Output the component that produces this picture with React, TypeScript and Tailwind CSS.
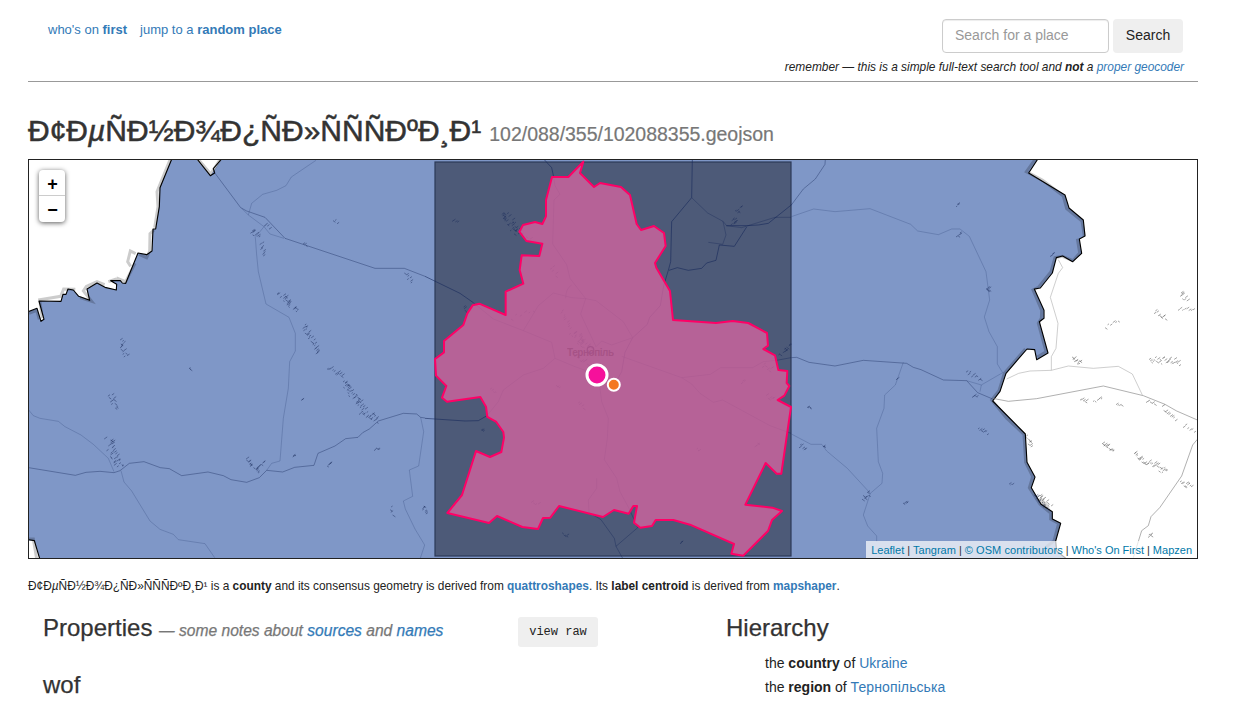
import React from "react";

type Cluster = [number, number, number, number, number, number];

// x1, y1, x2, y2, spread, count for each built-up patch
const settlements: Cluster[] = [
  [251, 231, 256, 237, 6, 9], [260, 243, 265, 256, 5, 9], [264, 225, 269, 228, 3, 4],
  [333, 220, 337, 223, 2, 3], [303, 244, 306, 245, 1, 3], [406, 273, 411, 283, 5, 7],
  [280, 294, 295, 311, 7, 24], [303, 325, 318, 354, 6, 26], [121, 340, 125, 357, 6, 14],
  [110, 395, 115, 408, 6, 12], [108, 439, 110, 448, 8, 10], [110, 450, 119, 467, 9, 22],
  [245, 459, 258, 473, 6, 14], [257, 469, 262, 462, 3, 7], [327, 367, 342, 378, 5, 12],
  [343, 382, 361, 407, 9, 34], [359, 410, 377, 420, 9, 22], [189, 369, 190, 369, 2, 3],
  [301, 400, 302, 400, 2, 2], [292, 457, 294, 455, 2, 3], [327, 465, 330, 463, 2, 4],
  [374, 450, 379, 448, 3, 5], [391, 507, 392, 515, 3, 4], [422, 506, 425, 514, 5, 7],
  [452, 220, 457, 222, 3, 4], [505, 213, 516, 232, 10, 28], [735, 212, 741, 209, 5, 6],
  [730, 225, 735, 219, 6, 8], [464, 307, 465, 312, 3, 4], [481, 431, 483, 432, 2, 3],
  [562, 534, 567, 535, 3, 4], [680, 543, 681, 543, 2, 3], [780, 355, 789, 345, 4, 10],
  [956, 206, 958, 205, 2, 3], [956, 237, 960, 233, 3, 5], [986, 290, 989, 289, 3, 6],
  [1050, 256, 1053, 254, 2, 4], [966, 373, 980, 379, 5, 9], [972, 396, 977, 397, 3, 4],
  [978, 429, 987, 434, 3, 7], [799, 446, 805, 449, 4, 6], [823, 446, 824, 446, 2, 3],
  [807, 407, 810, 407, 2, 4], [862, 499, 869, 493, 6, 8], [896, 379, 897, 379, 2, 2],
  [903, 504, 907, 503, 3, 4], [1009, 485, 1012, 485, 2, 3],
  [1033, 495, 1047, 510, 3, 12], [510, 230, 530, 238, 5, 6],
];

const easternSettlements: Cluster[] = [
  [1180, 293, 1185, 301, 5, 8], [1178, 309, 1193, 311, 3, 8], [1154, 312, 1165, 318, 4, 9],
  [1105, 327, 1118, 321, 2, 6], [1149, 359, 1179, 363, 6, 26], [1072, 359, 1080, 363, 6, 12],
  [1080, 401, 1086, 400, 2, 5], [1093, 401, 1101, 399, 2, 5], [1116, 405, 1121, 405, 2, 4],
  [1146, 402, 1154, 403, 2, 5], [1162, 408, 1175, 420, 3, 9], [1183, 426, 1194, 431, 4, 6],
  [1102, 443, 1113, 451, 5, 14], [1134, 454, 1145, 462, 5, 14], [1146, 462, 1166, 472, 6, 20],
  [1180, 482, 1191, 486, 7, 10], [1148, 536, 1151, 535, 3, 5], [1027, 436, 1030, 447, 4, 8],
  [1038, 496, 1048, 506, 7, 16],
];

const cityBlocks: Cluster[] = [
  [572, 333, 586, 348, 11, 30], [560, 311, 571, 329, 4, 9], [551, 267, 555, 276, 4, 5],
  [511, 318, 533, 311, 3, 6], [490, 389, 495, 391, 3, 4], [556, 386, 559, 388, 2, 3],
  [579, 403, 582, 408, 2, 4], [696, 449, 698, 451, 2, 3], [755, 447, 758, 443, 3, 4],
  [762, 366, 772, 370, 5, 7], [766, 397, 773, 398, 3, 5], [741, 383, 744, 381, 2, 3],
  [531, 502, 538, 504, 3, 4], [574, 357, 587, 362, 4, 10],
];

function noise(seed: number) {
  const v = Math.sin(seed * 127.1 + 11.7) * 43758.5453;
  return v - Math.floor(v);
}

function ticks(list: Cluster[]) {
  return list
    .map(([x1, y1, x2, y2, spread, count], c) => {
      const horizontal = Math.abs(x2 - x1) > Math.abs(y2 - y1);
      let d = "";
      for (let i = 0; i < count; i++) {
        const t = count > 1 ? i / (count - 1) : 0;
        const j = (noise(c * 57 + i) - 0.5) * spread;
        const x = x1 + (x2 - x1) * t + (horizontal ? 0 : j);
        const y = y1 + (y2 - y1) * t + (horizontal ? j : 0);
        const l = 1.2 + noise(c * 31 + i * 7) * 1.8;
        const s = noise(c + i * 13) > 0.25 ? -0.7 : 0.7;
        d += `M${x.toFixed(1)} ${y.toFixed(1)}l${l.toFixed(1)} ${(l * s).toFixed(1)}`;
      }
      return d;
    })
    .join("");
}

const westBorder =
  "M457 8L420 98L418 155L407 222H399L396 288L380 299L354 294L317 385L307 384L301 377H272L290 388L289 405L255 397L231 384L201 402L209 436L176 424L160 405L144 402L138 418H129L123 439L57 438L72 493L63 499L51 460L20 472";
const eastBorder =
  "M746 8L716 54L825 120L837 159L880 195L885 243L868 252L875 295L848 320L818 303L799 308L787 354L751 399L733 402L762 466V490L748 500L774 594L740 614L734 584L711 582L648 655L630 709L608 738L706 837L711 922L735 966L724 998L753 1048L787 1070V1092L812 1105L797 1158L800 1188L830 1212";
const county =
  "M30 612L57 592V558L115 510L127 475L143 451L163 446L242 480V410L295 386L284 345L290 301L343 303L352 266L304 258L283 230L294 210L330 201L352 207L363 184V135L381 66H430L475 20L465 54L507 96L525 84L588 96L615 120L635 207L648 225L687 213L717 234L722 273L690 324L694 338L735 408L744 495L873 504L923 498L970 504L1026 534L1029 572L1015 582L1050 601L1060 645L1087 648L1085 684L1093 693L1078 722L1058 735L1098 756L1069 956H1055L1022 924L961 1049L1042 1058L1071 1068L1041 1095L1029 1128L955 1202L919 1196L927 1167L795 1109L745 1095H692L681 1113L646 1118L627 1103L636 1053H625L611 1076L567 1065L534 1086L402 1053L376 1088L354 1089L339 1122L292 1116L216 1083L192 1104L67 1074L111 1020L153 888L195 906L229 891L237 848L235 831L214 801L187 786L183 755L166 726L66 740L51 728L64 693L33 662Z";

function RegionMap() {
  return (
    <svg viewBox="29 160 1168 398" className="block h-full w-full">
      <rect x="29" y="160" width="1168" height="398" fill="#7f97c7" />

      <g transform="translate(20 155) scale(.33333)">
        <path d={westBorder + "V8Z"} fill="#fff" />
        <path d="M24 1156L43 1157L60 1214H24Z" fill="#fff" />
        <path d="M525 8L571 62L608 8Z" fill="#fff" />
      </g>
      <g transform="translate(790 155) scale(.33333)">
        <path d={eastBorder + "H1230V8Z"} fill="#fff" />
      </g>

      <g fill="none" stroke="#000" strokeOpacity=".2" strokeWidth="9">
        <g transform="translate(20 155) scale(.33333)">
          <path d="M451 12L411 110L414 155L404 218M402 225L390 236L389 288L380 308L357 298M347 296L331 288L323 320L332 334M345 325L317 380L289 369M289 372L265 380M254 389L231 380L199 394L190 408L215 439L180 428M166 403L131 402L122 424L59 434L67 490M27 475L50 466L58 493M25 1152H40L50 1212M534 12L572 57L600 14" />
        </g>
        <g transform="translate(790 155) scale(.33333)">
          <path d="M739 8L709 50L758 76L820 123L830 161L876 198L883 243M862 251L869 294L849 317L817 304L795 308L783 350L745 397L729 405L755 466L754 490L745 505L768 590L742 606M706 582L643 655L627 707L605 735L650 790L702 838L707 922L728 965L718 998L750 1048L782 1074V1092L806 1105L792 1158L770 1175" />
        </g>
      </g>
      <path d="M1041 497L1050 507L1046 509L1037 500Z" fill="#000" opacity=".18" />

      <g fill="none" stroke="#000" strokeWidth="3.4" strokeLinejoin="round">
        <g transform="translate(20 155) scale(.33333)">
          <path d={westBorder} />
          <path d="M20 1153L43 1157L60 1214" />
          <path d="M528 8L571 62L584 54L580 41L608 8" />
        </g>
        <g transform="translate(790 155) scale(.33333)">
          <path d={eastBorder} />
        </g>
      </g>

      <rect x="435" y="162" width="356" height="394" fill="#4d5a78" stroke="#2c3957" strokeWidth="1.2" />

      <g fill="none" stroke="#132558" strokeOpacity=".38" strokeWidth="3">
        <g transform="translate(20 155) scale(.33333)">
          <path d="M583 52L662 158L680 168L735 187L795 250L1065 340H1153L1215 364" />
          <path d="M26 938L166 961L198 952L240 949L282 953L300 947L328 925L372 920L421 938L448 941L485 962L564 951L610 962L633 974L680 982L718 968L740 946L788 951L824 937L882 931L894 895L945 873L977 851L1014 847L1028 833L1048 822L1075 798L1150 775L1190 777L1202 787L1215 789" />
        </g>
        <g transform="translate(425 155) scale(.33333)">
          <path
            d="M0 364L105 415L145 443M0 790L120 798L160 797L186 782M356 12L380 38L386 66M802 12L800 128L740 200L737 320L730 346L716 392L706 452L674 487L667 508L623 548L600 592L590 650L578 672M905 212H965L1000 210L1030 205L1100 149M965 216L928 274L883 270L873 316L845 324L830 340L790 346L757 338L732 346"
            strokeOpacity=".55"
          />
          <path
            d="M800 128L848 174L894 199L905 212M894 199L903 240L893 268L850 262M903 212L950 218L1050 187H1098"
            strokeOpacity=".35"
          />
          <path d="M386 66L390 92L405 118L387 135L383 267L425 329L435 370L482 431L467 477L513 575M145 443L205 492L295 527L380 562L390 610M295 527L340 452L385 414L440 428L482 431L513 437L595 500L623 548M513 575L530 558L560 570L623 548M390 610L450 635L520 660L530 740L550 790L547 850L538 914L575 970L585 1010L612 1060L638 1118L573 1174L593 1210M390 610L355 640L295 660L235 705L220 740L186 782M590 604L770 668L856 658L887 638H983L1015 620L1055 616L1098 608M770 668L800 687L825 715L865 742L893 735L1035 812L1098 835M573 1174L568 1150L528 1094L492 1072L490 1035L515 1000V970M440 390Q422 400 422 430" />
        </g>
        <g transform="translate(790 155) scale(.33333)">
          <path d="M106 12L105 28L76 72L40 102L4 150M4 608L20 607L57 622L135 633L220 616L350 625L370 637L393 644L460 675L530 677L563 713L608 732" />
        </g>
      </g>

      <g fill="none" stroke="#2b4175" strokeOpacity=".32" strokeWidth="2.5">
        <g transform="translate(20 155) scale(.33333)">
          <path d="M888 16L814 66L798 92L770 106L728 118L695 145L685 180L665 160M685 180L732 215L750 237L792 250M732 215L706 247L710 300L715 350L738 447L807 487L826 535V588L809 620L805 700L790 790L780 918L755 925L740 946M26 765L40 782L60 790L115 799L135 815L183 840L220 868L265 910L282 950M303 947L312 981L335 1008L390 1098L420 1123L460 1138L475 1154L555 1166L584 1208M1202 787L1211 830L1196 933L1168 945L1178 1024L1150 1038L1156 1062L1185 1122L1214 1170L1201 1210" />
        </g>
        <g transform="translate(790 155) scale(.33333)">
          <path d="M4 185L71 162L135 170L240 161L362 208L383 228L445 239L485 222H510L538 244L588 350L599 435L583 486L597 530L622 575V627L638 653M340 622L316 690L284 720L282 760L260 820L265 920L278 955L276 985L241 1015L220 1080L233 1113L260 1143V1160M4 837L63 868H95L110 888L172 940L241 1015M638 653L574 690L570 710M530 677L574 690" />
        </g>
      </g>

      <g fill="none" stroke="#777" strokeOpacity=".7" strokeWidth="2.5" transform="translate(790 155) scale(.33333)">
        <path d="M608 730L655 739L740 731L940 693L1060 722L1125 748L1160 768L1222 795M1222 853L1208 870L1175 963L1110 1057L1083 1085L1075 1112L1055 1127L1030 1208" />
        <path d="M805 314L818 338L805 355L781 427L804 505L798 580L784 605V646M650 672L686 655L720 648L784 646L835 633L910 640L985 634L1027 657L1057 720" stroke="#aaa" />
      </g>

      <path d={ticks(settlements)} stroke="#192b59" strokeOpacity=".52" strokeWidth=".9" fill="none" />
      <path d={ticks(easternSettlements)} stroke="#555" strokeOpacity=".6" strokeWidth=".9" fill="none" />
      <path d={ticks(cityBlocks)} stroke="#192b59" strokeOpacity=".55" strokeWidth="1" fill="none" />
      <text x="567" y="355.5" fontSize="10" fontWeight="bold" letterSpacing="-.45" fill="#06122f" opacity=".9" fontFamily="Liberation Sans, sans-serif">Тернопіль</text>
      <circle cx="590.5" cy="350" r="3.3" stroke="#0a1840" strokeWidth="1.2" fill="none" />

      <g transform="translate(425 155) scale(.33333)">
        <path d={county} fill="#d965a1" fillOpacity=".75" />
        <path d={county} fill="none" stroke="#ff0066" strokeWidth="6" strokeLinejoin="round" />
      </g>
      <circle cx="597" cy="375" r="10" fill="#f6109b" stroke="#fff" strokeWidth="3" />
      <circle cx="613.8" cy="384.8" r="6" fill="#f47820" stroke="#fff" strokeWidth="2" />
    </svg>
  );
}

const link = "text-[#337ab7]";

function PlaceName() {
  return (
    <>
      Ð¢Ð<i>µ</i>ÑÐ½Ð¾Ð¿ÑÐ»ÑÑÑÐºÐ¸Ð¹
    </>
  );
}

export default function App() {
  return (
    <div className="h-[701px] overflow-hidden bg-white pr-[35px] pl-7 font-['Liberation_Sans',Arial,sans-serif] text-sm leading-5 text-[#222]">
      <header className="flex h-[82px] justify-between border-b border-[#999] pr-[14px] pl-5">
        <nav className="flex gap-[13px] pt-5 text-[13px]">
          <a className={link}>who's on <b>first</b></a>
          <a className={link}>jump to a <b>random place</b></a>
        </nav>
        <div className="flex flex-col items-end pt-[19px]">
          <div className="flex gap-1 pr-px">
            <input
              placeholder="Search for a place"
              className="h-[34px] w-[167px] rounded border border-[#ccc] px-3 pb-0.5 shadow-[inset_0_1px_1px_rgba(0,0,0,0.075)] placeholder:text-[#999]"
            />
            <button className="h-[34px] w-[70px] rounded bg-[#efefef] pb-0.5">Search</button>
          </div>
          <p className="pt-1 text-[11.9px] italic">
            remember — this is a simple full-text search tool and <b>not</b> a <a className={link}>proper geocoder</a>
          </p>
        </div>
      </header>

      <h1 className="flex h-[77px] items-baseline gap-2 pt-8 text-[30px] leading-[33px] whitespace-nowrap text-[#333]">
        <span className="[-webkit-text-stroke:0.5px_#333]"><PlaceName /></span>
        <small className="text-[19.5px] tracking-[-0.02px] text-[#777] [-webkit-text-stroke:0.2px_#777]">102/088/355/102088355.geojson</small>
      </h1>

      <section className="relative h-[400px] border border-[#222]">
        <RegionMap />
        <div className="absolute top-[10px] left-[10px] flex w-[26px] flex-col overflow-hidden rounded bg-white text-center text-[18px] font-bold text-black shadow-[0_1px_5px_rgba(0,0,0,0.65)]">
          <button className="h-[26px] border-b border-[#ccc] pt-px pl-px leading-[26px]">+</button>
          <button className="h-[26px] pt-px pl-px leading-[26px]">−</button>
        </div>
        <div className="absolute right-0 bottom-0 flex h-[17px] items-center gap-[3px] bg-white/70 px-[5px] text-[11px] whitespace-nowrap text-[#333]">
          <a className="text-[#0078a8]">Leaflet</a>|<a className="text-[#0078a8]">Tangram</a>|
          <a className="tracking-[0.07px] text-[#0078a8]">© OSM contributors</a>|<a className="text-[#0078a8]">Who's On First</a>|
          <a className="text-[#0078a8]">Mapzen</a>
        </div>
      </section>

      <p className="pt-[17px] text-[11.9px] tracking-[-0.008px] whitespace-nowrap">
        <PlaceName /> is a <b>county</b> and its consensus geometry is derived from <b className={link}>quattroshapes</b>. Its{" "}
        <b>label centroid</b> is derived from <b className={link}>mapshaper</b>.
      </p>

      <div className="flex pl-[15px]">
        <section className="w-[683px]">
          <div className="flex pt-[18px]">
            <h2 className="w-[475px] text-[24px] leading-[28px] text-[#333] [-webkit-text-stroke:0.25px]">
              Properties{" "}
              <small className="text-[15.6px] text-[#777] italic">
                — some notes about <a className={link}>sources</a> and <a className={link}>names</a>
              </small>
            </h2>
            <button className="mt-[3px] h-[30px] w-20 rounded-[3px] bg-[#efefef] font-['Liberation_Mono',monospace] text-[12px]">view raw</button>
          </div>
          <h2 className="pt-6 text-[24px] leading-[28px] text-[#333] [-webkit-text-stroke:0.25px]">wof</h2>
        </section>
        <section className="pt-[18px]">
          <h2 className="text-[24px] leading-[28px] text-[#333] [-webkit-text-stroke:0.25px]">Hierarchy</h2>
          <ul className="pt-[9px] pl-[39px] leading-6">
            <li>the <b>country</b> of <a className={link}>Ukraine</a></li>
            <li>the <b>region</b> of <a className={`${link} tracking-[0.1px]`}>Тернопільська</a></li>
          </ul>
        </section>
      </div>
    </div>
  );
}
